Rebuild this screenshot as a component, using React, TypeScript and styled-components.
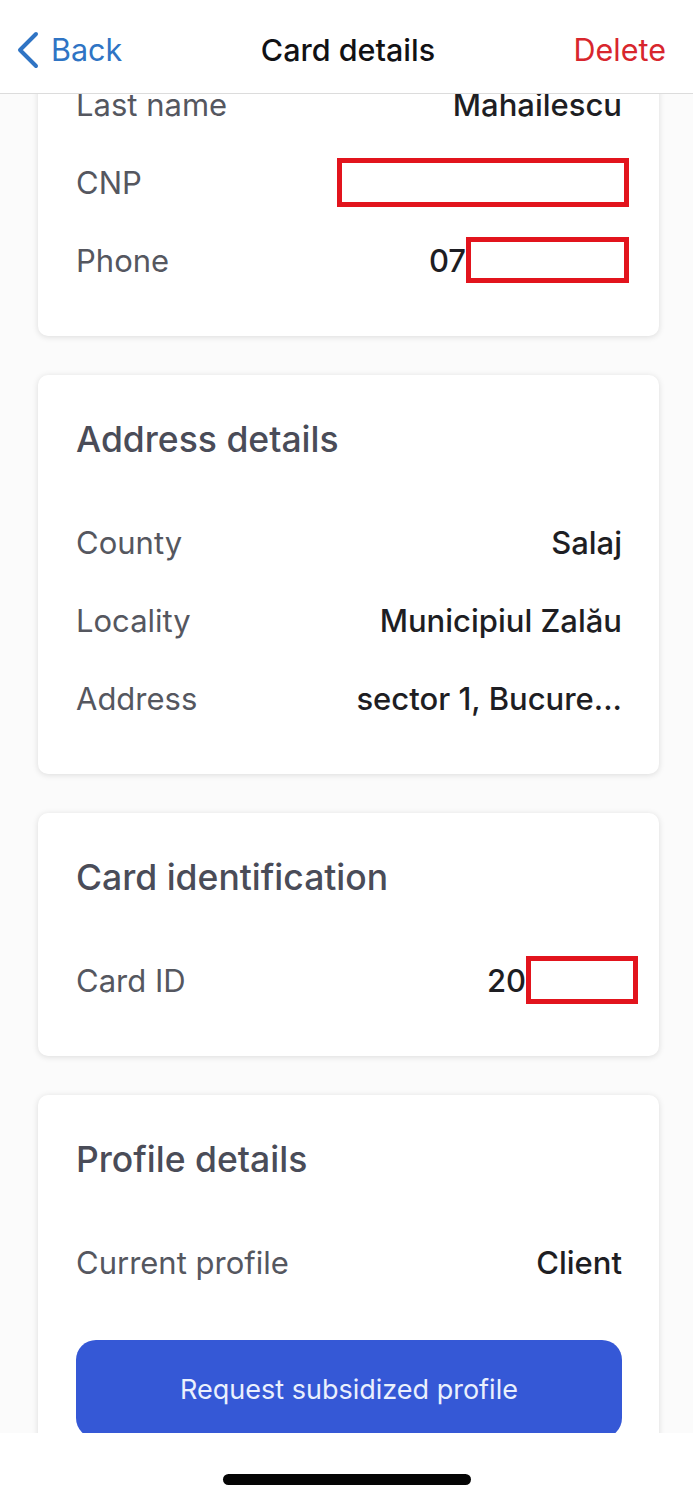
import styled, { createGlobalStyle } from "styled-components";

const GlobalStyle = createGlobalStyle`
   html, body {
      margin: 0;
      padding: 0;
      background: #ffffff;
   }
   * {
      box-sizing: border-box;
   }
`

const StyledScreen = styled.div`
   width: 693px;
   height: 1500px;
   display: flex;
   flex-direction: column;
   font-family: Inter, "Noto Sans", sans-serif;
   background: #fbfbfb;
   overflow: hidden;
`

const StyledHeader = styled.header`
   height: 94px;
   flex-shrink: 0;
   display: grid;
   grid-template-columns: 1fr auto 1fr;
   align-items: center;
   padding: 6px 12px 0 15px;
   background: #ffffff;
   border-bottom: 1px solid #dcdcdc;
   font-size: 30.5px;
`

const StyledBack = styled.button`
   justify-self: start;
   display: flex;
   align-items: center;
   gap: 12px;
   border: none;
   background: none;
   padding: 0;
   font: inherit;
   color: #2f74c4;
`

const StyledTitle = styled.span`
   color: #111114;
   font-weight: 500;
`

const StyledDelete = styled.button`
   justify-self: end;
   margin-right: 15px;
   border: none;
   background: none;
   padding: 0;
   font: inherit;
   color: #d8262d;
`

const StyledScroll = styled.div`
   height: 1339px;
   flex-shrink: 0;
   overflow: hidden;
`

const StyledList = styled.div`
   display: flex;
   flex-direction: column;
   gap: 39px;
   padding: 38px 34px 60px 38px;
`

const StyledCard = styled.section`
   background: #ffffff;
   border-radius: 10px;
   box-shadow: 0 1px 6px rgba(0, 0, 0, 0.13);
   padding: 37px 37px 37px 38px;
   display: flex;
   flex-direction: column;
`

const StyledHeading = styled.h2`
   margin: 0 0 37px;
   height: 54px;
   display: flex;
   align-items: center;
   font-size: 35.5px;
   font-weight: 500;
   color: #4a4c58;
`

const StyledRow = styled.div`
   height: 78px;
   display: flex;
   align-items: center;
   justify-content: space-between;
   font-size: 31px;
`

const StyledLabel = styled.span`
   color: #55575f;
`

const StyledValue = styled.span`
   display: flex;
   align-items: center;
   color: #1e1e23;
   font-weight: 450;
`

const StyledRedact = styled.span<{ $w: number; $h: number; $over: number }>`
   display: inline-block;
   width: ${(props) => props.$w}px;
   height: ${(props) => props.$h}px;
   margin-right: -${(props) => props.$over}px;
   border: 5px solid #e2141d;
   background: #ffffff;
`

const StyledButton = styled.button`
   margin-top: 39px;
   height: 98px;
   flex-shrink: 0;
   border: none;
   border-radius: 20px;
   background: #3558d6;
   color: #eaf0fd;
   font-family: inherit;
   font-size: 27px;
`

const StyledBottom = styled.div`
   flex: 1;
   background: #ffffff;
   display: flex;
   justify-content: center;
   padding-top: 41px;
`

const StyledHomeBar = styled.div`
   width: 248px;
   height: 11px;
   border-radius: 6px;
   background: #050505;
`

interface Field {
   label: string
   value?: string
   redact?: { w: number; h: number; over: number }
}

const personal: Field[] = [
   { label: "Last name", value: "Mahailescu" },
   { label: "CNP", redact: { w: 292, h: 49, over: 7 } },
   { label: "Phone", value: "07", redact: { w: 163, h: 46, over: 7 } },
]

const address: Field[] = [
   { label: "County", value: "Salaj" },
   { label: "Locality", value: "Municipiul Zalău" },
   { label: "Address", value: "sector 1, Bucure..." },
]

const card: Field[] = [
   { label: "Card ID", value: "20", redact: { w: 112, h: 48, over: 16 } },
]

const profile: Field[] = [
   { label: "Current profile", value: "Client" },
]

const Rows = ({ fields }: { fields: Field[] }) => (
   <>
      {fields.map((field) =>
         <StyledRow key={field.label}>
            <StyledLabel>{field.label}</StyledLabel>
            <StyledValue>
               {field.value}
               {field.redact && <StyledRedact $w={field.redact.w} $h={field.redact.h} $over={field.redact.over} />}
            </StyledValue>
         </StyledRow>
      )}
   </>
)

const App = () => {
   return (
      <StyledScreen>
         <GlobalStyle />
         <StyledHeader>
            <StyledBack>
               <svg width="24" height="38" viewBox="0 0 24 38" fill="none">
                  <path d="M21 3 L5 19 L21 35" stroke="#2f74c4" strokeWidth="4" strokeLinecap="round" strokeLinejoin="round" />
               </svg>
               Back
            </StyledBack>
            <StyledTitle>Card details</StyledTitle>
            <StyledDelete>Delete</StyledDelete>
         </StyledHeader>

         <StyledScroll ref={(el) => { if (el) el.scrollTop = 104 }}>
            <StyledList>
               <StyledCard>
                  <Rows fields={personal} />
               </StyledCard>

               <StyledCard>
                  <StyledHeading>Address details</StyledHeading>
                  <Rows fields={address} />
               </StyledCard>

               <StyledCard>
                  <StyledHeading>Card identification</StyledHeading>
                  <Rows fields={card} />
               </StyledCard>

               <StyledCard>
                  <StyledHeading>Profile details</StyledHeading>
                  <Rows fields={profile} />
                  <StyledButton>Request subsidized profile</StyledButton>
               </StyledCard>
            </StyledList>
         </StyledScroll>

         <StyledBottom>
            <StyledHomeBar />
         </StyledBottom>
      </StyledScreen>
   )
}

export default App;
